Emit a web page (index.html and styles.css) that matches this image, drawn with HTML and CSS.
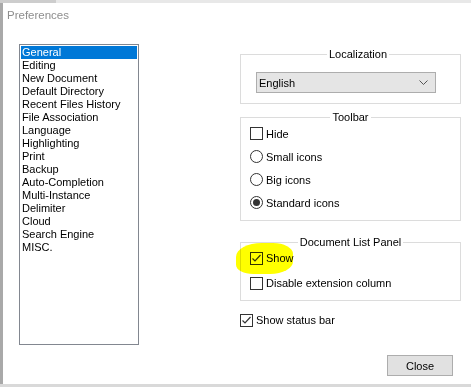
FILE: index.html
```html
<!DOCTYPE html>
<html lang="en">

<head>
    <meta charset="UTF-8">
    <meta name="viewport" content="width=device-width, initial-scale=1.0">
    <title>Preferences</title>
    <link rel="stylesheet" href="styles.css">
</head>

<body>

    <div class="topstrip">
        <div class="tab"></div>
    </div>

    <div class="window">
        <div class="titlebar">Preferences</div>

        <div class="main">
            <div class="listbox">
                <div class="item selected">General</div>
                <div class="item">Editing</div>
                <div class="item">New Document</div>
                <div class="item">Default Directory</div>
                <div class="item">Recent Files History</div>
                <div class="item">File Association</div>
                <div class="item">Language</div>
                <div class="item">Highlighting</div>
                <div class="item">Print</div>
                <div class="item">Backup</div>
                <div class="item">Auto-Completion</div>
                <div class="item">Multi-Instance</div>
                <div class="item">Delimiter</div>
                <div class="item">Cloud</div>
                <div class="item">Search Engine</div>
                <div class="item">MISC.</div>
            </div>

            <div class="panel">
                <fieldset class="group localization">
                    <legend>Localization</legend>
                    <div class="select">
                        <span>English</span>
                        <svg width="9" height="5" viewBox="0 0 9 5"><polyline points="0.5,0.5 4.5,4.5 8.5,0.5" fill="none" stroke="#555" stroke-width="1"/></svg>
                    </div>
                </fieldset>

                <fieldset class="group toolbar">
                    <legend>Toolbar</legend>
                    <div class="row first"><span class="box"></span>Hide</div>
                    <div class="row"><span class="radio"></span>Small icons</div>
                    <div class="row"><span class="radio"></span>Big icons</div>
                    <div class="row"><span class="radio on"></span>Standard icons</div>
                </fieldset>

                <fieldset class="group doclist">
                    <legend>Document List Panel</legend>
                    <div class="row short"><span class="box">
                        <svg width="11" height="11" viewBox="0 0 11 11"><polyline points="1.5,5.5 4,8 9.5,2" fill="none" stroke="#333" stroke-width="1.2"/></svg>
                    </span>Show</div>
                    <div class="row short"><span class="box"></span>Disable extension column</div>
                </fieldset>

                <div class="row short status"><span class="box">
                    <svg width="11" height="11" viewBox="0 0 11 11"><polyline points="1.5,5.5 4,8 9.5,2" fill="none" stroke="#333" stroke-width="1.2"/></svg>
                </span>Show status bar</div>

                <div class="footer">
                    <button class="close">Close</button>
                </div>
            </div>
        </div>
    </div>

    <div class="bottomstrip"></div>

    <div class="highlight"></div>

</body>

</html>
```

FILE: styles.css
```css
body {
    margin: 0;
    width: 471px;
    height: 387px;
    overflow: hidden;
    position: relative;
    background: #fff;
    font-family: 'Liberation Sans', Arial, sans-serif;
    font-size: 11px;
    color: #000;
}

.topstrip {
    height: 3px;
    background: #e8e8e8;
    display: flex;
}

.topstrip .tab {
    width: 56px;
    background: #cdcdcd;
}

.window {
    height: 381px;
    border-left: 3px solid #a9a9a9;
    display: flex;
    flex-direction: column;
}

.titlebar {
    height: 41px;
    box-sizing: border-box;
    padding: 5px 0 0 4px;
    line-height: 14px;
    font-size: 11.5px;
    color: #8e8e8e;
}

.main {
    display: flex;
    padding-left: 16px;
}

.listbox {
    width: 120px;
    height: 301px;
    box-sizing: border-box;
    border: 1px solid #828790;
    padding: 1px;
}

.item {
    height: 13px;
    line-height: 13px;
    padding-left: 1px;
    white-space: nowrap;
}

.item.selected {
    background: #0078d7;
    color: #fff;
}

.panel {
    width: 221px;
    margin-left: 101px;
    padding-top: 4px;
    display: flex;
    flex-direction: column;
}

.group {
    margin: 0;
    padding: 0 9px;
    border: 1px solid #dcdcdc;
    min-inline-size: 0;
}

.group legend {
    margin: 0 auto;
    padding: 0 2px;
    line-height: 13px;
}

.localization {
    padding: 0 0 10px 15px;
}

.select {
    margin-top: 11px;
    width: 180px;
    height: 21px;
    box-sizing: border-box;
    border: 1px solid #adadad;
    background: #e5e5e5;
    display: flex;
    align-items: center;
    justify-content: space-between;
    padding: 0 7px 0 2px;
}

.select svg {
    display: block;
}

.toolbar {
    margin-top: 7px;
    padding-bottom: 6px;
}

.row {
    height: 23px;
    display: flex;
    align-items: center;
    gap: 3px;
    white-space: nowrap;
}

.row.first {
    margin-top: -2px;
}

.row.short {
    height: 18px;
}

.box {
    width: 13px;
    height: 13px;
    box-sizing: border-box;
    border: 1px solid #333;
    background: #fff;
    display: flex;
    align-items: center;
    justify-content: center;
}

.box svg {
    display: block;
}

.radio {
    width: 13px;
    height: 13px;
    box-sizing: border-box;
    border: 1px solid #333;
    border-radius: 50%;
    background: #fff;
    display: flex;
    align-items: center;
    justify-content: center;
}

.radio.on::after {
    content: "";
    width: 7px;
    height: 7px;
    border-radius: 50%;
    background: #333;
}

.doclist {
    margin-top: 15px;
    padding-bottom: 8px;
    display: flex;
    flex-direction: column;
    gap: 7px;
}

.status {
    margin-top: 10px;
}

.footer {
    display: flex;
    justify-content: flex-end;
    margin-top: 26px;
    padding-right: 8px;
}

.close {
    width: 66px;
    height: 21px;
    border: 1px solid #adadad;
    background: #e1e1e1;
    font-family: inherit;
    font-size: 11px;
    color: #000;
    padding: 0;
}

.bottomstrip {
    height: 3px;
    background: #d9d9d9;
}

/* yellow marker stroke over "Show" */
.highlight {
    position: absolute;
    left: 236px;
    top: 243px;
    width: 57px;
    height: 31px;
    background: #ffff00;
    border-radius: 45% 35% 40% 30%;
    mix-blend-mode: multiply;
}
```
